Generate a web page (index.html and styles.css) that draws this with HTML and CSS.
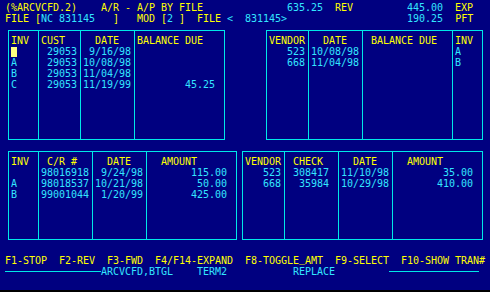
FILE: index.html
```html
<!DOCTYPE html>
<html>
<head>
	<title>A/R - A/P BY FILE</title>
	<link rel="stylesheet" href="styles.css">
</head>
<body>
	<div class="screen">
		<div class="line">(%ARCVCFD.2)    A/R - A/P BY FILE              <span class="val">635.25</span>  REV         <span class="val">445.00</span>  EXP</div>
		<div class="line">FILE [<span class="val">NC 831145</span>   ]   MOD [<span class="val">2</span> ]  FILE <span class="val">&lt;  831145&gt;</span>                    <span class="val">190.25</span>  PFT</div>

		<div class="panels top">
			<div class="box">
				<div class="col c-inv"><span class="hd">INV</span>
<span class="cursor"></span>
A
B
C</div>
				<div class="col c-num"><span class="hd">CUST</span>
 29053
 29053
 29053
 29053</div>
				<div class="col c-date"><span class="hd">  DATE</span>
 9/16/98
10/08/98
11/04/98
11/19/99</div>
				<div class="col c-amt"><span class="hd">BALANCE DUE</span>



        45.25</div>
			</div>
			<div class="box">
				<div class="col c-num"><span class="hd">VENDOR</span>
   523
   668</div>
				<div class="col c-date"><span class="hd">  DATE</span>
10/08/98
11/04/98</div>
				<div class="col c-wide"><span class="hd"> BALANCE DUE</span></div>
				<div class="col c-inv-end"><span class="hd">INV</span>
A
B</div>
			</div>
		</div>

		<div class="panels bottom">
			<div class="box">
				<div class="col c-inv"><span class="hd">INV</span>

A
B</div>
				<div class="col c-date"><span class="hd"> C/R #</span>
98016918
98018537
99001044</div>
				<div class="col c-date"><span class="hd">  DATE</span>
 9/24/98
10/21/98
 1/20/99</div>
				<div class="col c-amt"><span class="hd">  AMOUNT</span>
       115.00
        50.00
       425.00</div>
			</div>
			<div class="box">
				<div class="col c-num"><span class="hd">VENDOR</span>
   523
   668</div>
				<div class="col c-date"><span class="hd"> CHECK</span>
 308417
  35984</div>
				<div class="col c-date"><span class="hd">  DATE</span>
11/10/98
10/29/98</div>
				<div class="col c-amt"><span class="hd">  AMOUNT</span>
        35.00
       410.00</div>
			</div>
		</div>

		<div class="line keys">F1-STOP  F2-REV  F3-FWD  F4/F14-EXPAND  F8-TOGGLE<span class="us">_</span>AMT  F9-SELECT  F10-SHOW TRAN#</div>
		<div class="line status"><span class="rule rule-left"></span><span class="val">ARCVCFD,BTGL    TERM2           REPLACE         </span><span class="rule rule-right"></span></div>
	</div>
</body>
</html>
```

FILE: styles.css
```css
body {
	background-color: #000;
	margin: 0;
	padding: 0;
}
.screen {
	background-color: #000080;
	box-sizing: border-box;
	color: #FFFF00;
	font-family: "DejaVu Sans Mono", monospace;
	font-size: 10px;
	letter-spacing: -0.02px;
	line-height: 11px;
	height: 290px;
	padding: 2px 5px 0;
	width: 490px;
}
.line {
	height: 11px;
	white-space: pre;
}
.val {
	color: #33E6FF;
}
.us {
	line-height: 0;
	vertical-align: 2px;
}
.panels {
	display: flex;
	justify-content: space-between;
	padding: 0 2px 0 3px;
}
.panels.top {
	margin-top: 6px;
}
.panels.bottom {
	margin-top: 11px;
}
.box {
	border: 1px solid #00E8E8;
	box-sizing: border-box;
	display: flex;
	height: 110px;
}
.bottom .box {
	height: 89px;
}
.col {
	border-right: 1px solid #00E8E8;
	box-sizing: border-box;
	color: #33E6FF;
	padding: 4px 0 0 2px;
	white-space: pre;
}
.col:last-child {
	border-right: none;
}
.hd {
	color: #FFFF00;
}
.c-inv {
	width: 30px;
}
.c-num {
	width: 42px;
}
.c-date {
	width: 54px;
}
.c-wide {
	width: 90px;
}
.c-amt {
	width: 89px;
}
.c-inv-end {
	width: 29px;
}
.cursor {
	background-color: #FFFF80;
	display: inline-block;
	height: 10px;
	margin-top: 1px;
	vertical-align: top;
	width: 6px;
}
.keys {
	margin-top: 15px;
}
.status {
	align-items: center;
	display: flex;
}
.rule {
	border-top: 1px solid #00E8E8;
	display: block;
	height: 0;
}
.rule-left {
	width: 96px;
}
.rule-right {
	width: 90px;
}
```
